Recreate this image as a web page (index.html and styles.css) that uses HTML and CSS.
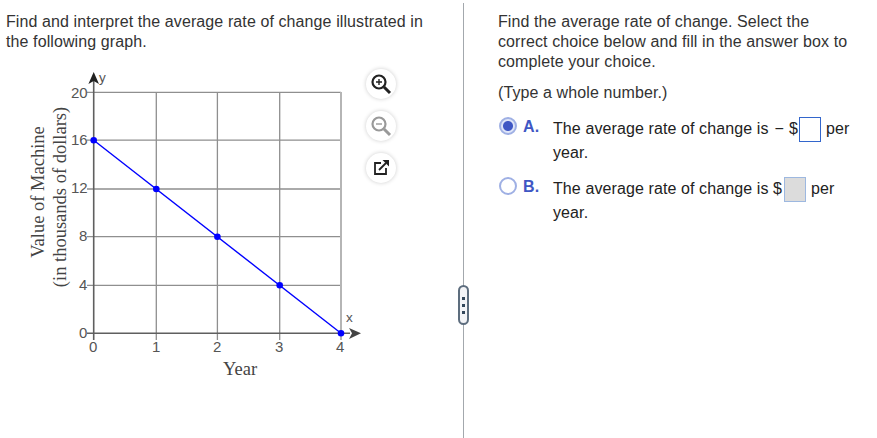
FILE: index.html
```html
<!DOCTYPE html>
<html lang="en">
<head>
<meta charset="utf-8">
<title>Average rate of change</title>
<link rel="stylesheet" href="styles.css">
</head>
<body>
<main class="page">
  <section class="left">
    <p class="prompt">Find and interpret the average rate of change illustrated in the following graph.</p>
    <svg class="graph" width="410" height="330" viewBox="0 60 410 330" xmlns="http://www.w3.org/2000/svg">
      <g class="grid">
        <path d="M87 92.400H341M87 140.200H341M87 189H341M87 236.700H341M87 285.300H341"/>
        <path d="M156.300 92V340M217.400 92V340M279.700 92V340"/>
        <path class="edge" d="M341 92V340"/>
      </g>
      <path class="axis" d="M93.700 80V340M87 333.300H350"/>
      <path class="arrow" d="M93.700 72L99 84L93.700 81L88.400 84Z"/>
      <path class="arrow" d="M361 333.300L349 328L352 333.300L349 339Z"/>
      <path class="line" d="M93.700 140.200L341 333.300"/>
      <g class="pts">
        <circle cx="93.700" cy="140.200" r="3.300"/>
        <circle cx="156.300" cy="189" r="3.300"/>
        <circle cx="217.400" cy="236.700" r="3.300"/>
        <circle cx="279.700" cy="285.300" r="3.300"/>
        <circle cx="341" cy="333.300" r="3.300"/>
      </g>
      <g class="tick">
        <text x="71" y="98">20</text>
        <text x="71" y="145">16</text>
        <text x="71" y="193">12</text>
        <text x="79" y="241">8</text>
        <text x="79" y="290">4</text>
        <text x="79" y="338">0</text>
        <text x="89" y="352">0</text>
        <text x="152" y="352">1</text>
        <text x="213" y="352">2</text>
        <text x="275" y="352">3</text>
        <text x="336" y="352">4</text>
        <text class="small" x="99" y="82">y</text>
        <text class="small" x="346" y="322">x</text>
      </g>
      <text class="title" x="240" y="375" text-anchor="middle">Year</text>
      <text class="title" transform="translate(44 192) rotate(-90)" text-anchor="middle">Value of Machine</text>
      <text class="title" transform="translate(66 197) rotate(-90)" text-anchor="middle">(in thousands of dollars)</text>
    </svg>
    <div class="tools">
      <button class="tool" type="button" aria-label="Zoom in">
        <svg width="24" height="24" viewBox="0 0 24 24"><circle class="ink" cx="10" cy="10" r="6.500"/><path class="ink thin" d="M10 7V13M7 10H13"/><path class="ink heavy" d="M15 15L21 21"/></svg>
      </button>
      <button class="tool muted" type="button" aria-label="Zoom out">
        <svg width="24" height="24" viewBox="0 0 24 24"><circle class="ink" cx="10" cy="10" r="6.500"/><path class="ink thin" d="M7 10H13"/><path class="ink heavy" d="M15 15L21 21"/></svg>
      </button>
      <button class="tool" type="button" aria-label="Open in new window">
        <svg width="24" height="24" viewBox="0 0 24 24"><path class="ink thin2" d="M12 7H6V18H17V12"/><path class="ink thin2" d="M10 14L17 7"/><path class="fillink" d="M13.500 4H20V10.500Z"/></svg>
      </button>
    </div>
  </section>
  <div class="divider">
    <div class="handle"><span></span><span></span><span></span></div>
  </div>
  <section class="right">
    <p class="prompt">Find the average rate of change. Select the correct choice below and fill in the answer box to complete your choice.</p>
    <p class="hint">(Type a whole number.)</p>
    <div class="choice first">
      <span class="radio selected"></span>
      <span class="letter">A.</span>
      <div class="answer">
        <div class="row">The average rate of change is<span class="minus">&minus;</span>$<span class="box active"></span><span class="unit">per</span></div>
        <div class="row">year.</div>
      </div>
    </div>
    <div class="choice">
      <span class="radio"></span>
      <span class="letter">B.</span>
      <div class="answer">
        <div class="row">The average rate of change is $<span class="box off"></span><span class="unit">per</span></div>
        <div class="row">year.</div>
      </div>
    </div>
  </section>
</main>
</body>
</html>
```

FILE: styles.css
```css
* { box-sizing: border-box; }
html, body { margin: 0; padding: 0; background: #fff; }
body { font-family: "Liberation Sans", Arial, sans-serif; font-size: 16px; letter-spacing: .1px; color: #333; overflow: hidden; }
p { margin: 0; }

.page { display: flex; width: 877px; height: 438px; }

.left { position: relative; width: 463px; padding: 12px 0 0 6px; }
.left .prompt { width: 430px; line-height: 20px; }
.graph { display: block; margin: 8px 0 0 -6px; letter-spacing: 0; }

.grid path { fill: none; stroke: #8f8f8f; stroke-width: 1.300; }
.grid .edge { stroke: #b5b5b5; stroke-width: 2; }
.axis { fill: none; stroke: #5f5f5f; stroke-width: 1.600; }
.arrow { fill: #222; }
.arrow + .arrow { fill: #444; }
.line { fill: none; stroke: #0000ff; stroke-width: 1.400; }
.pts circle { fill: #0000ff; }
.tick text { font-family: "Liberation Sans", Arial, sans-serif; font-size: 15px; fill: #555; }
.tick text.small { font-size: 13.500px; }
.title { font-family: "Liberation Serif", "Times New Roman", serif; font-size: 18.500px; fill: #444; }

.tools { position: absolute; left: 366px; top: 69px; display: flex; flex-direction: column; gap: 12px; }
.tool { width: 30px; height: 30px; padding: 0; border: 0; border-radius: 50%; background: #fff; box-shadow: 0 0 4px rgba(0,0,0,.2); display: flex; align-items: center; justify-content: center; }
.tool svg { display: block; }
.ink { fill: none; stroke: #222; stroke-width: 2.200; }
.ink.thin { stroke-width: 1.400; }
.ink.thin2 { stroke-width: 1.800; }
.ink.heavy { stroke-width: 3; }
.fillink { fill: #222; }
.muted .ink { stroke: #999; }

.divider { position: relative; width: 1px; height: 438px; margin-top: 3px; background: #a3a8ad; }
.handle { position: absolute; left: -5px; top: 282px; width: 11px; height: 40px; border: 2px solid #5d6d7e; border-radius: 6px; background: #f3f4f7; display: flex; flex-direction: column; align-items: center; justify-content: center; gap: 4px; }
.handle span { display: block; width: 3px; height: 3px; background: #33475b; }

.right { padding: 12px 0 0 34px; flex: 1; }
.right .prompt { width: 360px; line-height: 20px; }
.hint { margin-top: 11px; line-height: 20px; }

.choice { display: flex; align-items: flex-start; margin-top: 10px; }
.choice.first { margin-top: 13px; }
.radio { width: 18px; height: 18px; margin: 1px 0 0 1px; border: 2px solid #9fb0e4; border-radius: 50%; background: #fff; flex: none; }
.radio.selected { background: radial-gradient(circle, #3f57c4 0 4.500px, #dfe5f8 5.500px); }
.letter { width: 30px; margin-left: 6px; margin-top: 1px; font-weight: 700; color: #3f57c4; flex: none; line-height: 20px; }
.answer { flex: none; }
.row { display: flex; align-items: center; height: 26px; line-height: 20px; white-space: pre; color: #222; }
.row + .row { height: 22px; margin-bottom: 2px; }
.minus { margin-left: 6px; margin-right: 5px; }
.box { display: block; width: 22px; height: 25px; margin-left: 1px; }
.box.active { border: 1px solid #3366cc; background: #fff; }
.box.off { border: 1px solid #9db8e0; background: #dcdcdc; margin-left: 2px; }
.unit { margin-left: 5px; }
```
